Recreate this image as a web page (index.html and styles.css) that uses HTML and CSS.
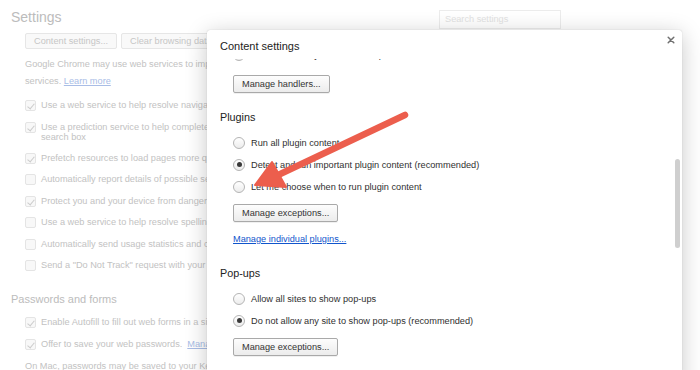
FILE: index.html
```
<!DOCTYPE html>
<html lang="en">
  <head>
    <meta charset="UTF-8" />
    <title>Settings - Content settings</title>
    <link rel="stylesheet" href="styles.css">
  </head>
  <body>
    <section class="page">
      <header class="page-head">
        <h1>Settings</h1>
        <div class="search">Search settings</div>
      </header>

      <div class="btn-row">
        <span class="bg-btn">Content settings...</span>
        <span class="bg-btn">Clear browsing data...</span>
      </div>

      <p class="bg-text">
        Google Chrome may use web services to improve your browsing experience. You may optionally disable these<br />
        services. <a href="#">Learn more</a>
      </p>

      <ul class="checks">
        <li><span class="box on"></span>Use a web service to help resolve navigation errors</li>
        <li><span class="box on"></span><span>Use a prediction service to help complete searches and URLs typed in the address bar or the app launcher<br />search box</span></li>
        <li><span class="box on"></span>Prefetch resources to load pages more quickly</li>
        <li><span class="box"></span>Automatically report details of possible security incidents to Google</li>
        <li><span class="box on"></span>Protect you and your device from dangerous sites</li>
        <li><span class="box"></span>Use a web service to help resolve spelling errors</li>
        <li><span class="box"></span>Automatically send usage statistics and crash reports to Google</li>
        <li><span class="box"></span>Send a "Do Not Track" request with your browsing traffic</li>
      </ul>

      <h2>Passwords and forms</h2>

      <ul class="checks">
        <li><span class="box on"></span>Enable Autofill to fill out web forms in a single click.</li>
        <li><span class="box on"></span>Offer to save your web passwords. <a href="#">Manage passwords</a></li>
      </ul>
      <p class="bg-text last">On Mac, passwords may be saved to your Keychain and accessed or synced by other Chrome users</p>
    </section>

    <section class="dialog">
      <header class="dialog-head">
        <h3>Content settings</h3>
        <svg class="close" width="8" height="8" viewBox="0 0 8 8">
          <path d="M1.2 1.2 L6.8 6.8 M6.8 1.2 L1.2 6.8" stroke="#707070" stroke-width="1.5" stroke-linecap="round" />
        </svg>
      </header>

      <div class="dialog-body">
        <div class="option hidden-row"><span class="radio"></span>Do not allow any site to handle protocols</div>
        <span class="btn">Manage handlers...</span>

        <h4>Plugins</h4>
        <div class="option"><span class="radio"></span>Run all plugin content</div>
        <div class="option"><span class="radio on"></span>Detect and run important plugin content (recommended)</div>
        <div class="option"><span class="radio"></span>Let me choose when to run plugin content</div>
        <span class="btn">Manage exceptions...</span>
        <a class="link" href="#">Manage individual plugins...</a>

        <h4>Pop-ups</h4>
        <div class="option"><span class="radio"></span>Allow all sites to show pop-ups</div>
        <div class="option"><span class="radio on"></span>Do not allow any site to show pop-ups (recommended)</div>
        <span class="btn">Manage exceptions...</span>
      </div>

      <div class="scrollbar"></div>
    </section>

    <svg class="arrow" width="700" height="370" viewBox="0 0 700 370">
      <line x1="405" y1="115" x2="276" y2="176" stroke="#ec5e4d" stroke-width="6.5" stroke-linecap="round" />
      <polygon points="255,185 272,162 286,187" fill="#ec5e4d" stroke="#ec5e4d" stroke-width="2" stroke-linejoin="round" />
    </svg>
  </body>
</html>
```

FILE: styles.css
```
* {
  margin: 0;
  padding: 0;
  box-sizing: border-box;
  --faded: #c2c2c2;
  --ink: #303030;
  --link: #1155cc;
}

body {
  width: 700px;
  height: 370px;
  overflow: hidden;
  background-color: #fff;
  font-family: "Liberation Sans", Arial, sans-serif;
  font-size: 9.2px;
  position: relative;
}

/* faded settings page behind the dialog */

.page {
  padding: 8px 0 0 11px;
  color: var(--faded);
  white-space: nowrap;
}

.page-head {
  display: flex;
  justify-content: space-between;
  align-items: flex-start;
  width: 550px;
}

.page-head h1 {
  font-size: 14px;
  font-weight: normal;
  line-height: 18px;
  color: #bcbcbc;
}

.search {
  width: 122px;
  height: 19px;
  margin-top: 2px;
  border: 1px solid #ececec;
  padding: 3px 5px;
  color: #e2e2e2;
  font-size: 9.2px;
}

.btn-row {
  display: flex;
  gap: 4px;
  margin: 4px 0 0 14px;
}

.bg-btn {
  height: 16px;
  line-height: 14px;
  padding: 0 8px;
  border: 1px solid #e6e6e6;
  border-radius: 2px;
  background-color: #f9f9f9;
  color: #c6c6c6;
}

.bg-text {
  margin: 7px 0 0 14px;
  line-height: 17px;
}

.bg-text a,
.checks a {
  color: #a9bde6;
}

.bg-text.last {
  margin-top: 11px;
  line-height: 10.5px;
}

.checks {
  list-style: none;
  display: flex;
  flex-direction: column;
  gap: 10.5px;
  margin: 10px 0 0 14px;
}

.checks li {
  display: flex;
  align-items: flex-start;
  gap: 5px;
  line-height: 10.3px;
}

.box {
  width: 11px;
  height: 11px;
  flex-shrink: 0;
  border: 1px solid #e4e4e4;
  border-radius: 2px;
  background-color: #f8f8f8;
  position: relative;
}

.box.on::after {
  content: "";
  position: absolute;
  left: 3px;
  top: 1px;
  width: 3px;
  height: 6px;
  border: solid #cbcbcb;
  border-width: 0 1.5px 1.5px 0;
  transform: rotate(40deg);
}

.page h2 {
  font-size: 11px;
  font-weight: normal;
  line-height: 14px;
  margin-top: 21px;
  color: #bcbcbc;
}

.page h2 + .checks {
  margin-top: 11px;
}

/* content settings dialog */

.dialog {
  position: absolute;
  left: 207px;
  top: 30px;
  width: 475px;
  height: 360px;
  background-color: #fff;
  border-radius: 3px 3px 0 0;
  box-shadow: 0 4px 22px rgba(0, 0, 0, 0.22), 0 0 1px rgba(0, 0, 0, 0.25);
  color: var(--ink);
  white-space: nowrap;
}

.dialog-head {
  height: 29px;
  display: flex;
  justify-content: space-between;
  align-items: flex-start;
  padding: 9px 7px 0 13px;
}

.dialog-head h3 {
  font-size: 11px;
  font-weight: normal;
  line-height: 14px;
  color: #222;
}

.close {
  margin-top: -3px;
}

.dialog-body {
  height: 331px;
  overflow: hidden;
  padding-left: 26px;
  display: flex;
  flex-direction: column;
  align-items: flex-start;
}

.dialog-body h4 {
  font-size: 10.8px;
  font-weight: normal;
  line-height: 14px;
  margin: 17px 0 7.5px -13px;
  color: #222;
}

.option {
  height: 22px;
  display: flex;
  align-items: center;
  gap: 6px;
}

.hidden-row {
  margin-top: -15px;
  margin-bottom: 2.5px;
}

.radio {
  width: 12px;
  height: 12px;
  border-radius: 50%;
  border: 1px solid #b4b4b4;
  background: linear-gradient(#ffffff, #ececec);
  display: flex;
  align-items: center;
  justify-content: center;
}

.radio.on::after {
  content: "";
  width: 5px;
  height: 5px;
  border-radius: 50%;
  background-color: #3a3a3a;
}

.btn {
  height: 18px;
  line-height: 16px;
  padding: 0 8px;
  border: 1px solid #a9a9a9;
  border-radius: 2px;
  background: linear-gradient(#fdfdfd, #ececec);
  box-shadow: 0 1px 0 rgba(0, 0, 0, 0.06);
  color: #333;
}

.option + .btn {
  margin-top: 6.5px;
}

.link {
  margin-top: 9.5px;
  line-height: 14px;
  color: var(--link);
}

.link + h4 {
  margin-top: 20.5px;
}

.scrollbar {
  position: absolute;
  right: 2px;
  top: 129px;
  width: 5px;
  height: 89px;
  border-radius: 3px;
  background-color: #cfcfcf;
}

.arrow {
  position: absolute;
  left: 0;
  top: 0;
}
```
